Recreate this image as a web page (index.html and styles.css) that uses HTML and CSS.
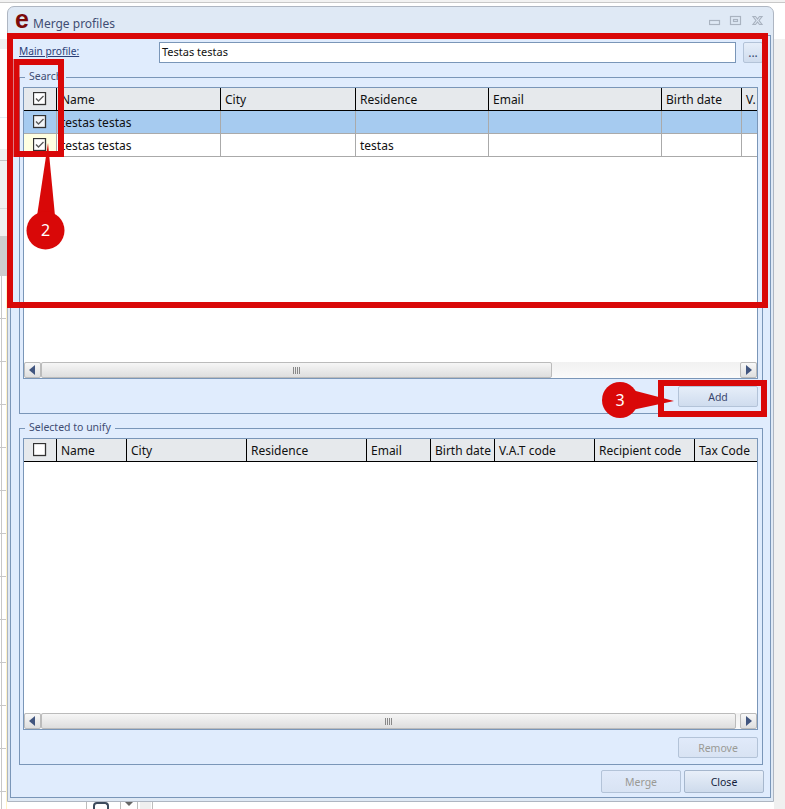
FILE: index.html
```html
<!DOCTYPE html>
<html lang="en">
<head>
<meta charset="utf-8">
<title>Merge profiles</title>
<link rel="stylesheet" href="styles.css">
</head>
<body>
<div class="backdrop">
  <div class="bd-top"></div>
  <div class="bd-left-a"></div>
  <div class="bd-left-b"></div>
  <div class="bd-left-c"></div>
  <div class="bd-left-d"></div>
  <div class="bd-left-rows"></div>
  <div class="bd-right"></div>
  <div class="bd-bottom">
    <span class="bd-rule bd-r1"></span>
    <span class="bd-arc"></span>
    <span class="bd-rule bd-r2"></span>
    <span class="bd-caret"></span>
    <span class="bd-rule bd-r3"></span>
    <span class="bd-shade"></span>
    <span class="bd-rule bd-r4"></span>
  </div>
</div>

<div class="window">
  <header class="titlebar">
    <span class="logo">e</span>
    <span class="title">Merge profiles</span>
    <svg class="winctl" width="56" height="14" viewBox="0 0 56 14">
      <rect x="0.500" y="6.500" width="10" height="4" />
      <rect x="21.500" y="2.500" width="10" height="8" />
      <rect x="24.500" y="5.500" width="4" height="2" />
      <path d="M44 2.500h2.500l2 2.500 2-2.500h2.500l-3 4 3 4h-2.500l-2-2.500-2 2.500h-2.500l3-4z" />
    </svg>
  </header>
  <div class="panel">
    <div class="main-row">
      <a class="main-label">Main profile:</a>
      <div class="text-input">Testas testas</div>
      <button class="btn btn-dots">...</button>
    </div>

    <section class="group group-search">
      <span class="legend">Search</span>
      <div class="grid-box">
        <div class="row head cols-a">
          <div class="cell"><svg class="chk" viewBox="0 0 14 14"><rect x="0.500" y="0.500" width="12" height="12" /><path d="M3 6.500l2.500 2.500 5-5" /></svg></div>
          <div class="cell">Name</div><div class="cell">City</div><div class="cell">Residence</div><div class="cell">Email</div><div class="cell">Birth date</div><div class="cell cell-last">V.</div>
        </div>
        <div class="row data selected cols-a">
          <div class="cell"><svg class="chk" viewBox="0 0 14 14"><rect x="0.500" y="0.500" width="12" height="12" /><path d="M3 6.500l2.500 2.500 5-5" /></svg></div>
          <div class="cell">testas testas</div><div class="cell"></div><div class="cell"></div><div class="cell"></div><div class="cell"></div><div class="cell cell-last"></div>
        </div>
        <div class="row data cols-a">
          <div class="cell cell-note"><svg class="chk" viewBox="0 0 14 14"><rect x="0.500" y="0.500" width="12" height="12" /><path d="M3 6.500l2.500 2.500 5-5" /></svg></div>
          <div class="cell">testas testas</div><div class="cell"></div><div class="cell">testas</div><div class="cell"></div><div class="cell"></div><div class="cell cell-last"></div>
        </div>
        <div class="grid-fill"></div>
        <div class="hscroll">
          <span class="sb-btn"><svg width="7" height="10" viewBox="0 0 7 10"><path d="M6 0v10L0 5z"/></svg></span>
          <span class="sb-thumb thumb-a"><svg class="grip" width="7" height="7" viewBox="0 0 7 7"><path d="M0 0h1v7H0zM2 0h1v7H2zM4 0h1v7H4zM6 0h1v7H6z"/></svg></span>
          <span class="sb-track"></span>
          <span class="sb-btn"><svg width="7" height="10" viewBox="0 0 7 10"><path d="M1 0v10l6-5z"/></svg></span>
        </div>
      </div>
      <div class="action-row"><button class="btn btn-act">Add</button></div>
    </section>

    <section class="group group-selected">
      <span class="legend">Selected to unify</span>
      <div class="grid-box">
        <div class="row head cols-b">
          <div class="cell"><svg class="chk" viewBox="0 0 14 14"><rect x="0.500" y="0.500" width="12" height="12" /></svg></div>
          <div class="cell">Name</div><div class="cell">City</div><div class="cell">Residence</div><div class="cell">Email</div><div class="cell">Birth date</div><div class="cell">V.A.T code</div><div class="cell">Recipient code</div><div class="cell cell-last">Tax Code</div>
        </div>
        <div class="grid-fill"></div>
        <div class="hscroll">
          <span class="sb-btn"><svg width="7" height="10" viewBox="0 0 7 10"><path d="M6 0v10L0 5z"/></svg></span>
          <span class="sb-thumb thumb-b"><svg class="grip" width="7" height="7" viewBox="0 0 7 7"><path d="M0 0h1v7H0zM2 0h1v7H2zM4 0h1v7H4zM6 0h1v7H6z"/></svg></span>
          <span class="sb-btn"><svg width="7" height="10" viewBox="0 0 7 10"><path d="M1 0v10l6-5z"/></svg></span>
        </div>
      </div>
      <div class="action-row"><button class="btn btn-act btn-disabled">Remove</button></div>
    </section>

    <footer class="footer-row">
      <button class="btn btn-foot btn-disabled">Merge</button>
      <button class="btn btn-foot btn-close">Close</button>
    </footer>
  </div>
</div>

<svg class="marks" width="785" height="809" viewBox="0 0 785 809">
  <rect class="mark-box" x="10" y="36" width="755" height="269" />
  <rect class="mark-box" x="16.500" y="62" width="44.500" height="92" />
  <rect class="mark-box" x="661" y="383" width="103" height="31" />
  <polygon class="mark-fill" points="48,143 37,216 55,216" />
  <circle class="mark-fill" cx="45.500" cy="230.500" r="19" />
  <polygon class="mark-fill" points="674,401 632,390 632,410" />
  <circle class="mark-fill" cx="620" cy="400" r="18" />
  <text class="mark-num" x="45.500" y="236">2</text>
  <text class="mark-num" x="620" y="406">3</text>
</svg>
</body>
</html>
```
FILE: styles.css
```css
* { box-sizing: border-box; }
html, body { margin: 0; padding: 0; }
body {
  width: 785px;
  height: 809px;
  overflow: hidden;
  position: relative;
  background: #fff;
  font-family: "Noto Sans", sans-serif;
  font-size: 12px;
  color: #000;
}

/* Application behind the dialog */
.backdrop { position: absolute; inset: 0; }
.bd-top { position: absolute; left: 0; right: 0; top: 0; height: 3px; background: #f2f2f2; border-bottom: 1px solid #c8c8c8; }
.bd-left-a { position: absolute; left: 0; width: 8px; top: 39px; height: 10px; background: #f0f0f0; }
.bd-left-b { position: absolute; left: 0; width: 8px; top: 117px; height: 1px; background: #e3eef5; }
.bd-left-c { position: absolute; left: 0; width: 8px; top: 149px; height: 12px; background: #f0f0f0; border-bottom: 1px solid #c4c4c4; }
.bd-left-d { position: absolute; left: 0; width: 8px; top: 161px; height: 115px; background: linear-gradient(#f0f0f0 0, #f0f0f0 47px, #c4c4c4 47px, #f0f0f0 48px, #f0f0f0 75px, #cdcdcd 75px); }
.bd-left-rows {
  position: absolute; left: 0; width: 8px; top: 276px; height: 533px;
  background:
    linear-gradient(#c8c8c8, #c8c8c8) 1px 0 / 1px 100% no-repeat,
    linear-gradient(#fff3c8, #fff3c8) 6px 0 / 1px 100% no-repeat,
    repeating-linear-gradient(#fff 0, #fff 42px, #c8c8c8 42px, #c8c8c8 43px);
}
.bd-right { position: absolute; left: 774px; right: 0; top: 39px; bottom: 0; background: #f0f0f0; }
.bd-bottom { position: absolute; left: 8px; width: 766px; top: 802px; height: 7px; background: #fff; display: flex; align-items: flex-start; }
.bd-rule { display: block; width: 1px; height: 7px; background: #bdbdbd; flex: none; }
.bd-r1 { margin-left: 78px; }
.bd-arc { width: 16px; height: 7px; margin-left: 6px; border: 2px solid #3c4a5c; border-bottom: 0; border-radius: 4px 4px 0 0; flex: none; }
.bd-r2 { margin-left: 11px; }
.bd-caret { width: 0; height: 0; margin: 0 4px 0 4px; border: 4px solid transparent; border-top: 4px solid #666; border-bottom: 0; flex: none; }
.bd-r3 { margin-left: 0; }
.bd-shade { width: 11px; height: 7px; margin-left: 2px; background: #efefef; flex: none; }
.bd-r4 { margin-left: 1px; }

/* Dialog window */
.window {
  position: absolute;
  left: 7px; top: 6px;
  width: 767px; height: 796px;
  display: flex; flex-direction: column;
  background: #dfe9f5;
  border: 1px solid #aeb6c2;
  border-radius: 7px 7px 0 0;
  padding: 0 2px 3px 2px;
}
.titlebar { height: 28px; flex: none; display: flex; align-items: center; position: relative; padding-left: 5px; }
.logo { font-family: "Liberation Sans", sans-serif; font-weight: 700; font-size: 25px; line-height: 28px; color: #7c0a0a; width: 18px; margin-top: -5px; }
.title { font-size: 12px; color: #3f4d73; margin-top: 5px; }
.winctl { margin-left: auto; margin-right: 6px; margin-top: 0; fill: none; stroke: #a9b3c0; stroke-width: 1.200; }

.panel {
  flex: 1; min-height: 0;
  background: #e0ecfd;
  border: 1px solid #7a96b8;
  padding: 6px 7px 4px 8px;
  display: flex; flex-direction: column;
}
.main-row { display: flex; height: 21px; flex: none; }
.main-label { width: 140px; color: #2a3f78; text-decoration: underline; font-size: 10.200px; line-height: 19px; }
.text-input { width: 577px; height: 21px; background: #fff; border: 1px solid #7a96b8; padding-left: 2px; font-size: 11px; line-height: 18px; color: #111; }
.btn {
  font-family: inherit; font-size: 10.500px; padding: 1px 0 0;
  border: 1px solid #b3c3d8; border-radius: 2px;
  background: linear-gradient(#e6eef9, #cfdcee);
  color: #39466e;
}
.btn-dots { width: 20px; height: 21px; margin-left: 7px; line-height: 14px; font-size: 12px; }

.group { position: relative; border: 1px solid #7a96b8; padding: 9px 4px 0 3px; display: flex; flex-direction: column; flex: none; }
.group-search { margin-top: 14px; height: 337px; }
.group-selected { margin-top: 14px; height: 337px; }
.legend { position: absolute; left: 5px; top: -10px; padding: 0 4px; background: #e0ecfd; color: #3f4d73; font-size: 10.500px; line-height: 16px; }

.grid-box { flex: 1; min-height: 0; border: 1px solid #7a96b8; background: #fff; display: flex; flex-direction: column; }
.row { display: grid; flex: none; }
.cols-a { grid-template-columns: 33px 164px 135px 133px 173px 80px 15px; }
.cols-b { grid-template-columns: 33px 70px 120px 120px 64px 64px 100px 100px 62px; }
.head { height: 23px; background: #e6e9ec; border-bottom: 1px solid #000; }
.head .cell { border-right: 1px solid #000; line-height: 24px; }
.data { height: 23px; border-bottom: 1px solid #aaa; }
.data .cell { border-right: 1px solid #aaa; line-height: 24px; }
.cell { padding-left: 4px; white-space: nowrap; overflow: hidden; color: #101010; min-width: 0; }
.row .cell:first-child { padding: 4px 0 0 9px; line-height: 0; }
.cell-last { border-right: 0 !important; }
.selected { background: #a6cbf0; }
.cell-note { background: #ffffe1; }
.chk { width: 14px; height: 14px; display: block; }
.chk rect { fill: #fff; stroke: #333; stroke-width: 1.300; }
.selected .chk rect { fill: #f2f5f8; }
.chk path { fill: none; stroke: #5c5c5c; stroke-width: 1.400; }

.grid-fill { flex: 1; min-height: 0; }
.hscroll { height: 16px; flex: none; display: flex; background: linear-gradient(#f1f1f1, #fafafa); }
.sb-btn { width: 17px; flex: none; border: 1px solid #bbb; border-radius: 2px; background: linear-gradient(#f8f8f8, #dfdfdf); display: flex; align-items: center; justify-content: center; }
.sb-btn svg { fill: #41557f; }
.sb-thumb { border: 1px solid #bbb; border-radius: 2px; background: linear-gradient(#f6f6f6, #dedede); display: flex; align-items: center; justify-content: center; }
.thumb-a { width: 511px; flex: none; }
.thumb-b { flex: 1; margin-right: 4px; }
.sb-track { flex: 1; }
.grip { fill: #888; }

.action-row { height: 34px; flex: none; display: flex; justify-content: flex-end; align-items: flex-start; padding-top: 7px; }
.btn-act { width: 80px; height: 21px; }
.btn-disabled { color: #9a9a95; background: linear-gradient(#e1eafa, #d8e3f3); }

.footer-row { flex: 1; display: flex; justify-content: flex-end; align-items: flex-start; gap: 3px; padding-top: 5px; margin-right: -1px; }
.btn-foot { width: 80px; height: 23px; }
.btn-close { color: #141c3a; background: linear-gradient(#e8eff9, #cedbec); border-color: #a6b7cd; }

/* Annotations over the dialog */
.marks { position: absolute; left: 0; top: 0; pointer-events: none; }
.mark-box { fill: none; stroke: #d90808; stroke-width: 6; }
.mark-fill { fill: #d90808; }
.mark-num { fill: #fff; font-family: "Noto Sans", sans-serif; font-size: 16px; text-anchor: middle; }
```
